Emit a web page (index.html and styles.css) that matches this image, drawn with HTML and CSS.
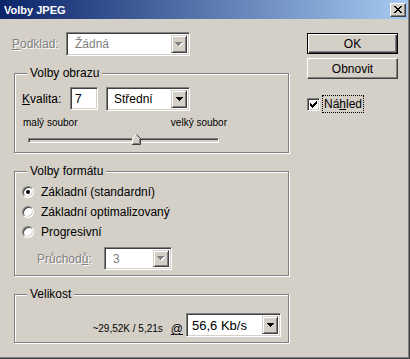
FILE: index.html
```html
<!DOCTYPE html>
<html lang="cs">
<head>
<meta charset="utf-8">
<title>Volby JPEG</title>
<link rel="stylesheet" href="styles.css">
</head>
<body>
<div class="window">
  <div class="titlebar">
    <span class="title">Volby JPEG</span>
    <span class="close">
      <svg width="8" height="7" viewBox="0 0 8 7" shape-rendering="crispEdges"><path d="M0 0h2v1H0zM6 0h2v1H6zM1 1h2v1H1zM5 1h2v1H5zM2 2h4v1H2zM3 3h2v1H3zM2 4h4v1H2zM1 5h2v1H1zM5 5h2v1H5zM0 6h2v1H0zM6 6h2v1H6z" fill="#000"/></svg>
    </span>
  </div>
  <div class="content">
    <div class="left">
      <div class="podklad">
        <span class="podklad-label disabled"><u>P</u>odklad:</span>
        <div class="combo combo-podklad">
          <span class="combo-text disabled">Žádná</span>
          <span class="combo-btn"><svg width="8" height="5" viewBox="0 0 8 5" shape-rendering="crispEdges"><path d="M1 1h7v1H1zM2 2h5v1H2zM3 3h3v1H3zM4 4h1v1H4z" fill="#fff"/><path d="M0 0h7v1H0zM1 1h5v1H1zM2 2h3v1H2zM3 3h1v1H3z" fill="#808080"/></svg></span>
        </div>
      </div>

      <div class="group g1">
        <div class="group-title">Volby obrazu</div>
        <div class="kvalita">
          <span class="kv-label"><u>K</u>valita:</span>
          <div class="field input-q">7</div>
          <div class="combo combo-q">
            <span class="combo-text">Střední</span>
            <span class="combo-btn"><svg width="7" height="4" viewBox="0 0 7 4" shape-rendering="crispEdges"><path d="M0 0h7v1H0zM1 1h5v1H1zM2 2h3v1H2zM3 3h1v1H3z" fill="#000"/></svg></span>
          </div>
        </div>
        <div class="slider-labels"><span>malý soubor</span><span>velký soubor</span></div>
        <div class="slider">
          <div class="track"></div>
          <div class="thumb">
            <svg width="9" height="11" viewBox="0 0 9 11">
              <path d="M0.5 10.5V4.5L4.5 0.5L8.5 4.5V10.5Z" fill="#d4d0c8"/>
              <path d="M0.5 10V4.5L4.5 0.5" fill="none" stroke="#fff"/>
              <path d="M4.5 0.5L8.5 4.5V10.5H0" fill="none" stroke="#404040"/>
              <path d="M7.5 5V9.5H1" fill="none" stroke="#808080"/>
            </svg>
          </div>
        </div>
      </div>

      <div class="group g2">
        <div class="group-title">Volby formátu</div>
        <div class="radios">
          <div class="radio-row"><span class="radio checked"></span><span>Základní (standardní)</span></div>
          <div class="radio-row"><span class="radio"></span><span>Základní optimalizovaný</span></div>
          <div class="radio-row"><span class="radio"></span><span>Progresivní</span></div>
        </div>
        <div class="pruchodu">
          <span class="pr-label disabled">Průchod<u>ů</u>:</span>
          <div class="combo combo-pr">
            <span class="combo-text disabled">3</span>
            <span class="combo-btn"><svg width="8" height="5" viewBox="0 0 8 5" shape-rendering="crispEdges"><path d="M1 1h7v1H1zM2 2h5v1H2zM3 3h3v1H3zM4 4h1v1H4z" fill="#fff"/><path d="M0 0h7v1H0zM1 1h5v1H1zM2 2h3v1H2zM3 3h1v1H3z" fill="#808080"/></svg></span>
          </div>
        </div>
      </div>

      <div class="group g3">
        <div class="group-title">Velikost</div>
        <div class="size-row">
          <span class="size-text">~29,52K / 5,21s</span>
          <span class="at"><u>@</u></span>
          <div class="combo combo-speed">
            <span class="combo-text">56,6 Kb/s</span>
            <span class="combo-btn"><svg width="7" height="4" viewBox="0 0 7 4" shape-rendering="crispEdges"><path d="M0 0h7v1H0zM1 1h5v1H1zM2 2h3v1H2zM3 3h1v1H3z" fill="#000"/></svg></span>
          </div>
        </div>
      </div>
    </div>

    <div class="right">
      <div class="btn btn-default">OK</div>
      <div class="btn btn-reset">Obnovit</div>
      <div class="check-row">
        <span class="checkbox">
          <svg width="7" height="7" viewBox="0 0 7 7" shape-rendering="crispEdges"><path d="M0 2h1v3H0zM1 3h1v3H1zM2 4h1v3H2zM3 3h1v3H3zM4 2h1v3H4zM5 1h1v3H5zM6 0h1v3H6z" fill="#000"/></svg>
        </span>
        <span class="focus">Ná<u>h</u>led</span>
      </div>
    </div>
  </div>
</div>
</body>
</html>
```
FILE: styles.css
```css
* { box-sizing: border-box; }

body {
  margin: 0;
  background: #d4d0c8;
  font-family: "Liberation Sans", Arial, sans-serif;
  font-size: 12px;
  color: #000;
}

.window {
  width: 410px;
  height: 359px;
  background: #d4d0c8;
  border-right: 1px solid #404040;
  border-bottom: 1px solid #404040;
  box-shadow: inset -1px -1px #808080;
  overflow: hidden;
}

.titlebar {
  height: 19px;
  margin-right: 1px;
  display: flex;
  align-items: center;
  padding: 0 2px 0 4px;
  background: linear-gradient(to right, #0a246a, #a6caf0);
}

.title {
  color: #fff;
  font-weight: bold;
  font-size: 11px;
}

.close {
  margin-left: auto;
  width: 16px;
  height: 14px;
  background: #d4d0c8;
  border: 1px solid;
  border-color: #fff #404040 #404040 #fff;
  box-shadow: inset -1px -1px #808080;
  display: flex;
  align-items: center;
  justify-content: center;
}

.content {
  display: flex;
  padding-top: 13px;
}

.left {
  margin-left: 14px;
  width: 275px;
}

.disabled {
  color: #808080;
  text-shadow: 1px 1px #fff;
}

u { text-decoration: underline; text-underline-offset: 1px; }

.podklad {
  margin-left: -2px;
  display: flex;
  align-items: center;
  height: 24px;
}

.podklad-label { width: 54px; }

/* sunken field */
.combo, .field {
  border: 1px solid;
  border-color: #808080 #fff #fff #808080;
  box-shadow: inset 1px 1px #404040, inset -1px -1px #d4d0c8;
  background: #fff;
}

.combo {
  display: flex;
  padding: 2px;
}

.combo-text {
  flex: 1;
  display: flex;
  align-items: center;
  padding-left: 3px;
  white-space: nowrap;
}

.combo-btn {
  width: 16px;
  background: #d4d0c8;
  border: 1px solid;
  border-color: #d4d0c8 #404040 #404040 #d4d0c8;
  box-shadow: inset 1px 1px #fff, inset -1px -1px #808080;
  display: flex;
  align-items: center;
  justify-content: center;
}

.combo-podklad { width: 124px; height: 24px; }
.combo-podklad .combo-text { padding-left: 6px; }

/* group boxes */
.group {
  border: 1px solid #808080;
  box-shadow: inset 1px 1px #fff, 1px 1px #fff;
}

.group-title {
  width: fit-content;
  margin: -8px 0 0 12px;
  padding: 0 3px;
  background: #d4d0c8;
  line-height: 14px;
}

.g1 { margin-top: 17px; padding-bottom: 6px; }

.kvalita {
  margin-top: 7px;
  padding-left: 7px;
  display: flex;
  align-items: center;
  height: 23px;
}

.kv-label { width: 48px; }

.input-q {
  width: 28px;
  height: 23px;
  display: flex;
  align-items: center;
  padding-left: 4px;
}

.combo-q { width: 84px; height: 24px; margin-left: 8px; }
.combo-q .combo-text { padding-left: 5px; }

.slider-labels {
  margin-top: 7px;
  margin-left: 8px;
  width: 204px;
  display: flex;
  justify-content: space-between;
  font-size: 10px;
  line-height: 12px;
}

.slider {
  position: relative;
  margin-top: 4px;
  margin-left: 13px;
  width: 191px;
  height: 13px;
  padding-top: 5px;
}

.track {
  height: 5px;
  border: 1px solid;
  border-color: #808080 #fff #fff #808080;
  box-shadow: inset 1px 1px #404040;
  background: #d4d0c8;
}

.thumb {
  position: absolute;
  left: 104px;
  top: 1px;
  width: 9px;
  height: 11px;
  line-height: 0;
}

.g2 { margin-top: 18px; padding-bottom: 5px; }

.radios { margin-top: 4px; }

.radio-row {
  height: 20px;
  display: flex;
  align-items: center;
  padding-left: 7px;
}

.radio {
  width: 12px;
  height: 12px;
  margin-right: 7px;
  border-radius: 50%;
  border: 1px solid;
  border-color: #808080 #fff #fff #808080;
  box-shadow: inset 1px 1px #404040, inset -1px -1px #d4d0c8;
  background: #fff;
  display: flex;
  align-items: center;
  justify-content: center;
}

.radio.checked::after {
  content: "";
  width: 4px;
  height: 4px;
  border-radius: 50%;
  background: #000;
}

.pruchodu {
  margin-top: 5px;
  padding-left: 22px;
  display: flex;
  align-items: center;
  height: 23px;
}

.pr-label { width: 67px; }

.combo-pr { width: 68px; height: 23px; }
.combo-pr .combo-text { padding-left: 6px; }

.g3 { margin-top: 18px; padding-bottom: 5px; }

.size-row {
  margin-top: 12px;
  padding-right: 7px;
  display: flex;
  justify-content: flex-end;
  align-items: flex-end;
}

.size-text {
  font-size: 10px;
  line-height: 14px;
  margin-right: 8px;
  padding-bottom: 1px;
}

.at {
  line-height: 14px;
  margin-right: 3px;
  padding-bottom: 1px;
}

.combo-speed { width: 95px; height: 24px; font-size: 13px; }
.combo-speed .combo-text { padding-left: 3px; }

.right {
  margin-left: 18px;
  width: 91px;
  display: flex;
  flex-direction: column;
}

.btn {
  height: 21px;
  display: flex;
  align-items: center;
  justify-content: center;
  background: #d4d0c8;
  border: 1px solid;
  border-color: #fff #404040 #404040 #fff;
  box-shadow: inset -1px -1px #808080;
}

.btn-default {
  margin-top: 1px;
  border-color: #000;
  box-shadow: inset 1px 1px #fff, inset -1px -1px #404040, inset -2px -2px #808080;
}

.btn-reset { margin-top: 4px; }

.check-row {
  margin-top: 16px;
  display: flex;
  align-items: center;
}

.checkbox {
  width: 13px;
  height: 13px;
  border: 1px solid;
  border-color: #808080 #fff #fff #808080;
  box-shadow: inset 1px 1px #404040, inset -1px -1px #d4d0c8;
  background: #fff;
  display: flex;
  align-items: center;
  justify-content: center;
  margin-right: 2px;
}

.focus {
  border: 1px dotted #000;
  padding: 1px 1px;
  line-height: 14px;
}
```
